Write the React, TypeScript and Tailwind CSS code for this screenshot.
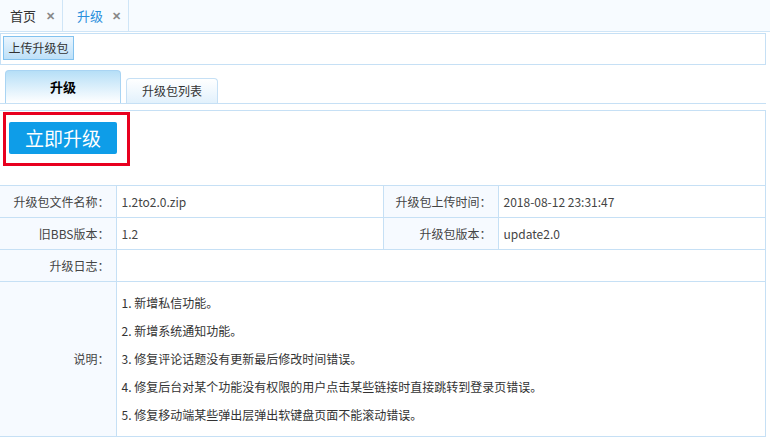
const font = { fontFamily: '"Noto Sans CJK SC", "Liberation Sans", sans-serif' };

const notes = [
  '1. 新增私信功能。',
  '2. 新增系统通知功能。',
  '3. 修复评论话题没有更新最后修改时间错误。',
  '4. 修复后台对某个功能没有权限的用户点击某些链接时直接跳转到登录页错误。',
  '5. 修复移动端某些弹出层弹出软键盘页面不能滚动错误。',
];

function Label({ children, first }: { children: React.ReactNode; first?: boolean }) {
  return (
    <td
      className={`bg-[#f6faff] border border-[#c6e0f5] text-right pr-[6px] text-[12px] text-[#444] ${
        first ? 'border-l-0' : ''
      }`}
    >
      {children}
    </td>
  );
}

function Value({ children, colSpan }: { children?: React.ReactNode; colSpan?: number }) {
  return (
    <td colSpan={colSpan} className="border border-[#c6e0f5] pl-[5px] text-[12px] text-[#444]">
      {children}
    </td>
  );
}

export default function App() {
  return (
    <div className="w-[770px] h-[440px] bg-white overflow-hidden" style={font}>
      {/* Top page tabs */}
      <div className="h-[32px] flex bg-[#f7fbff] border-b border-[#cfe5f7]">
        <div className="w-[63px] flex items-center pl-[10px] gap-[10px] border-r border-[#cfe5f7] text-[13px] text-[#333]">
          <span>首页</span>
          <span className="text-[11px] text-[#888] font-bold">✕</span>
        </div>
        <div className="w-[66px] flex items-center pl-[14px] gap-[9px] border-r border-[#cfe5f7] text-[13px] text-[#2a8fdc]">
          <span>升级</span>
          <span className="text-[11px] text-[#888] font-bold">✕</span>
        </div>
      </div>

      <div className="w-[766px]">
        {/* Toolbar */}
        <div className="mt-[1px] h-[32px] border border-[#c6e0f5] pl-[2px] pt-[2px]">
          <button className="h-[24px] w-[71px] border border-[#82c2ef] bg-gradient-to-b from-[#eaf5fe] to-[#bde0f8] text-[12px] text-[#333] flex items-center justify-center">
            上传升级包
          </button>
        </div>

        {/* Section tabs */}
        <div className="h-[39px] flex items-end pl-[5px] gap-[5px] border-b border-[#c6e0f5]">
          <div className="w-[116px] h-[33px] rounded-t-[4px] border border-b-0 border-[#a9d4f3] bg-gradient-to-b from-[#b6dff7] to-white flex items-center justify-center text-[13px] font-bold text-black">
            升级
          </div>
          <div className="w-[92px] h-[25px] rounded-t-[4px] border border-b-0 border-[#c6e0f5] bg-gradient-to-b from-white to-[#e2f1fc] flex items-center justify-center text-[12px] text-[#333]">
            升级包列表
          </div>
        </div>

        {/* Content */}
        <div className="mt-[6px] border-t border-r border-[#c6e0f5]">
          <div className="ml-[3px] mt-[1px] w-[127px] h-[54px] border-[3px] border-[#e8001f] pl-[3px] pt-[7px]">
            <button className="w-[108px] h-[32px] rounded-[2px] bg-[#0e9de8] text-white text-[19px] flex items-center justify-center">
              立即升级
            </button>
          </div>

          <table className="mt-[19px] w-[765px] border-collapse table-fixed">
            <colgroup>
              <col className="w-[116px]" />
              <col className="w-[267px]" />
              <col className="w-[115px]" />
              <col className="w-[267px]" />
            </colgroup>
            <tbody>
              <tr className="h-[32px]">
                <Label first>升级包文件名称：</Label>
                <Value>1.2to2.0.zip</Value>
                <Label>升级包上传时间：</Label>
                <Value>2018-08-12 23:31:47</Value>
              </tr>
              <tr className="h-[32px]">
                <Label first>旧BBS版本：</Label>
                <Value>1.2</Value>
                <Label>升级包版本：</Label>
                <Value>update2.0</Value>
              </tr>
              <tr className="h-[32px]">
                <Label first>升级日志：</Label>
                <Value colSpan={3} />
              </tr>
              <tr>
                <Label first>说明：</Label>
                <Value colSpan={3}>
                  <div className="py-[7px]">
                    {notes.map((n) => (
                      <div key={n} className="h-[28px] leading-[28px] text-[12px] text-[#333]">
                        {n}
                      </div>
                    ))}
                  </div>
                </Value>
              </tr>
            </tbody>
          </table>
        </div>
      </div>
    </div>
  );
}
